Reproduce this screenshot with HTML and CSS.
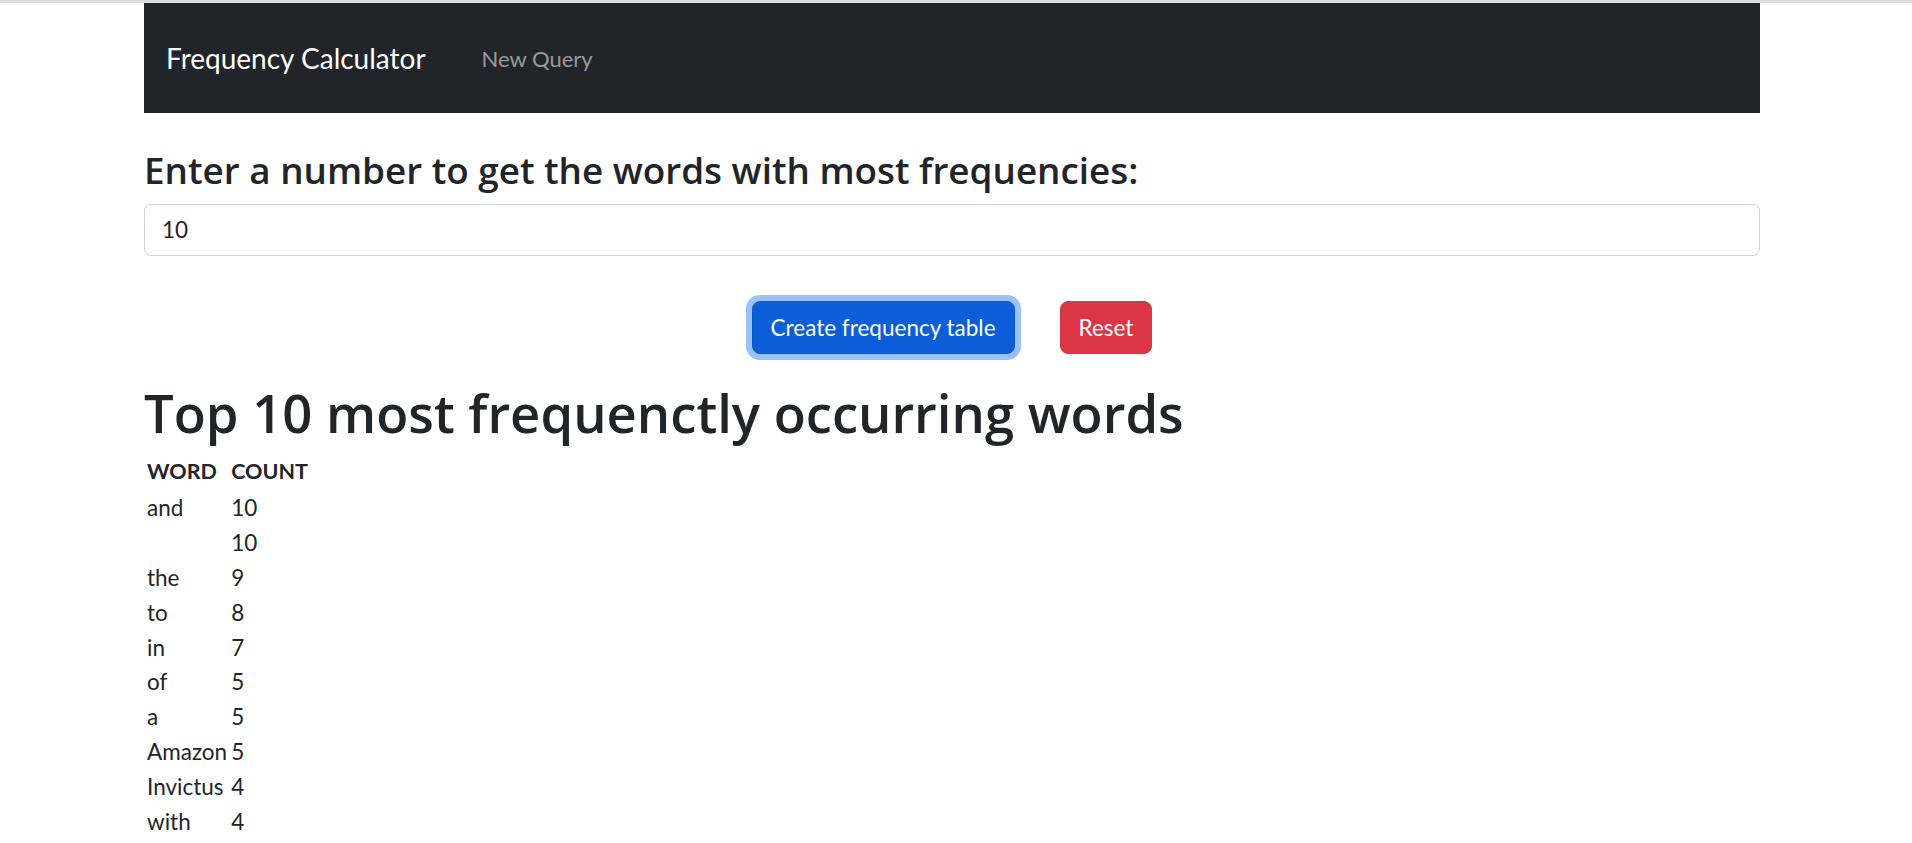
FILE: index.html
```html
<!DOCTYPE html>
<html lang="en">
<head>
<meta charset="utf-8">
<title>Frequency Calculator</title>
<link rel="stylesheet" href="styles.css">
</head>
<body>
<div class="topline"></div>
<div class="page">
  <nav class="navbar">
    <a class="brand" href="#">Frequency Calculator</a>
    <a class="nav-link" href="#">New Query</a>
  </nav>

  <h2 class="prompt">Enter a number to get the words with most frequencies:</h2>
  <input class="num-input" type="text" value="10">

  <div class="actions">
    <button class="btn btn-primary is-focused" type="button">Create frequency table</button>
    <button class="btn btn-danger" type="button">Reset</button>
  </div>

  <h1 class="result-title">Top 10 most frequenctly occurring words</h1>

  <table class="freq">
    <thead>
      <tr><th>WORD</th><th>COUNT</th></tr>
    </thead>
    <tbody>
      <tr><td>and</td><td>10</td></tr>
      <tr><td></td><td>10</td></tr>
      <tr><td>the</td><td>9</td></tr>
      <tr><td>to</td><td>8</td></tr>
      <tr><td>in</td><td>7</td></tr>
      <tr><td>of</td><td>5</td></tr>
      <tr><td>a</td><td>5</td></tr>
      <tr><td>Amazon</td><td>5</td></tr>
      <tr><td>Invictus</td><td>4</td></tr>
      <tr><td>with</td><td>4</td></tr>
    </tbody>
  </table>
</div>
</body>
</html>
```
FILE: styles.css
```css
html, body {
  margin: 0;
  padding: 0;
  background: #ffffff;
}

body {
  font-family: "Lato", "Open Sans", sans-serif;
  font-size: 22.5px;
  color: #212529;
}

.topline {
  height: 3px;
  background: #dcdde1;
}

.page {
  width: 1616px;
  margin-left: 144px;
}

/* Navbar */
.navbar {
  height: 110px;
  background: #212529;
  display: flex;
  align-items: center;
  padding-left: 22px;
  box-sizing: border-box;
}

.brand {
  font-family: "Lato", sans-serif;
  font-size: 28px;
  color: #ffffff;
  text-decoration: none;
  white-space: nowrap;
}

.nav-link {
  margin-left: 56px;
  font-family: "Lato", sans-serif;
  font-size: 22px;
  color: rgba(255, 255, 255, 0.55);
  text-decoration: none;
  white-space: nowrap;
}

/* Prompt heading */
.prompt {
  font-family: "Open Sans", sans-serif;
  font-weight: 600;
  font-size: 36.85px;
  line-height: 44px;
  margin: 34.6px 0 12.4px;
  color: #212529;
  white-space: nowrap;
}

.num-input {
  display: block;
  width: 100%;
  height: 52px;
  box-sizing: border-box;
  border: 1px solid #ced4da;
  border-radius: 7px;
  padding: 0 17px;
  font-family: "Lato", sans-serif;
  font-size: 22.5px;
  color: #212529;
  background: #ffffff;
  outline: none;
}

/* Buttons */
.actions {
  display: flex;
  justify-content: center;
  gap: 45px;
  margin-top: 45px;
}

.btn {
  height: 53px;
  padding: 0 18px;
  border: 1px solid transparent;
  border-radius: 8px;
  font-family: "Lato", sans-serif;
  font-size: 22.5px;
  color: #ffffff;
  cursor: pointer;
  white-space: nowrap;
}

.btn-primary {
  background: #0b5ed7;
  border-color: #0a58ca;
}

.btn-primary.is-focused {
  box-shadow: 0 0 0 6px #98c1fe;
}

.btn-danger {
  background: #dc3545;
  border-color: #dc3545;
}

/* Result */
.result-title {
  font-family: "Open Sans", sans-serif;
  font-weight: 600;
  font-size: 52.6px;
  line-height: 62px;
  margin: 27.6px 0 10.4px;
  color: #212529;
  white-space: nowrap;
}

.freq {
  border-collapse: collapse;
}

.freq th,
.freq td {
  padding: 0 1px 0 3px;
  line-height: 34.9px;
  text-align: left;
  vertical-align: baseline;
  white-space: nowrap;
}

.freq th {
  font-weight: 700;
  font-size: 21.5px;
  padding-bottom: 2px;
}

.freq td {
  font-size: 22.5px;
}
```
